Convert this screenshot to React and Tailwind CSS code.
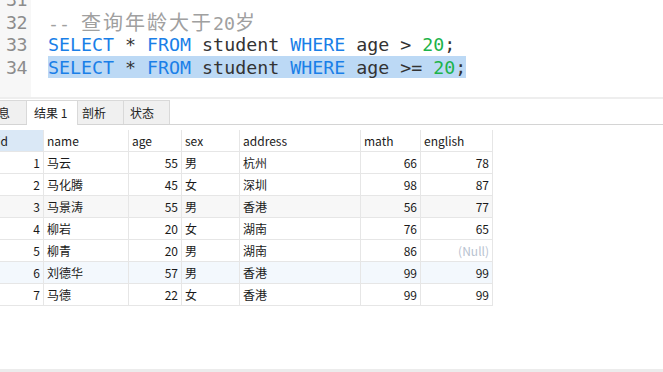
export default function App() {

  const rows = [
    { id: 1, name: "马云", age: 55, sex: "男", address: "杭州", math: 66, english: 78, bg: "bg-white" },
    { id: 2, name: "马化腾", age: 45, sex: "女", address: "深圳", math: 98, english: 87, bg: "bg-white" },
    { id: 3, name: "马景涛", age: 55, sex: "男", address: "香港", math: 56, english: 77, bg: "bg-[#f7f7f7]" },
    { id: 4, name: "柳岩", age: 20, sex: "女", address: "湖南", math: 76, english: 65, bg: "bg-white" },
    { id: 5, name: "柳青", age: 20, sex: "男", address: "湖南", math: 86, english: null, bg: "bg-white" },
    { id: 6, name: "刘德华", age: 57, sex: "男", address: "香港", math: 99, english: 99, bg: "bg-[#f3f8fd]" },
    { id: 7, name: "马德", age: 22, sex: "女", address: "香港", math: 99, english: 99, bg: "bg-white" },
  ]

  const kw = "text-[#1a7fe8]"
  const num = "text-[#1db34a]"
  const line = "h-[22.5px] leading-[22.5px] overflow-visible"

  const cell = "border-r border-b border-[#e6e6e6] px-[3px] h-[22px] flex items-center"

  return (
    <div className="w-[663px] h-[372px] bg-white flex flex-col overflow-hidden" style={{ fontFamily: '"Noto Sans CJK SC", sans-serif' }}>

      {/* Editor */}
      <div className="h-[97px] flex overflow-hidden text-[18.3px] leading-[22.5px]" style={{ fontFamily: '"DejaVu Sans Mono", monospace' }}>
        <div className="w-[31px] bg-[#f7f7f7] text-[#8c8c8c] text-right pr-[4px] -mt-[11px] shrink-0 tracking-[-0.5px]">
          <div className={line}>31</div>
          <div className={line}>32</div>
          <div className={line}>33</div>
          <div className={line}>34</div>
        </div>
        <div className="flex-1 pl-[17px] -mt-[11px] text-[#333] whitespace-pre">
          <div className={line}>&nbsp;</div>
          <div className={`${line} text-[#a0a0a0]`}>
            -- <span className="text-[20px] leading-[20px] tracking-[2px]" style={{ fontFamily: '"Noto Sans CJK SC", sans-serif' }}>查询年龄大于</span>20<span className="text-[20px] leading-[20px]" style={{ fontFamily: '"Noto Sans CJK SC", sans-serif' }}>岁</span>
          </div>
          <div className={line}>
            <span className={kw}>SELECT</span> * <span className={kw}>FROM</span> student <span className={kw}>WHERE</span> age &gt; <span className={num}>20</span>;
          </div>
          <div className={line}>
            <span className="bg-[#bcd9f5] py-[0.5px]"><span className={kw}>SELECT</span> * <span className={kw}>FROM</span> student <span className={kw}>WHERE</span> age &gt;= <span className={num}>20</span>;</span>
          </div>
        </div>
      </div>

      <div className="h-[2px] bg-[#eeeeee]" />

      {/* Tabs */}
      <div className="h-[25px] flex items-end border-b border-[#d4d4d4] text-[12px] text-[#222] mt-[1px]">
        <div className="h-[24px] w-[27px] bg-[#f0f0f0] border-r border-t border-[#d9d9d9] flex items-center justify-end pr-[16px] overflow-hidden">
          <span>息</span>
        </div>
        <div className="h-[25px] w-[51px] bg-white border-r border-t border-[#d9d9d9] -mb-[1px] flex items-center pl-[7px]">
          结果 1
        </div>
        <div className="h-[24px] w-[46px] bg-[#f0f0f0] border-r border-t border-[#d9d9d9] flex items-center pl-[4px]">
          剖析
        </div>
        <div className="h-[24px] w-[46px] bg-[#f0f0f0] border-r border-t border-[#d9d9d9] flex items-center pl-[6px]">
          状态
        </div>
      </div>

      {/* Grid */}
      <div className="mt-[5px] text-[12px] text-[#1a1a1a]">
        <div className="grid grid-cols-[44px_85px_53px_58px_121px_60px_72px] w-[493px]">
          <div className={`${cell} bg-[#dae8f6] justify-end overflow-hidden`}><span className="-mr-[1px] -translate-x-[33px]">id</span></div>
          <div className={cell}>name</div>
          <div className={cell}>age</div>
          <div className={cell}>sex</div>
          <div className={cell}>address</div>
          <div className={cell}>math</div>
          <div className={cell}>english</div>

          {rows.map((r) => (
            <div key={r.id} className="contents">
              <div className={`${cell} ${r.bg} justify-end`}>{r.id}</div>
              <div className={`${cell} ${r.bg}`}>{r.name}</div>
              <div className={`${cell} ${r.bg} justify-end`}>{r.age}</div>
              <div className={`${cell} ${r.bg}`}>{r.sex}</div>
              <div className={`${cell} ${r.bg}`}>{r.address}</div>
              <div className={`${cell} ${r.bg} justify-end`}>{r.math}</div>
              <div className={`${cell} ${r.bg} justify-end`}>
                {r.english === null ? <span className="text-[#b8c2d0]">(Null)</span> : r.english}
              </div>
            </div>
          ))}
        </div>
      </div>

      <div className="flex-1" />
      <div className="h-[3px] bg-[#ececec]" />

    </div>
  )
}
